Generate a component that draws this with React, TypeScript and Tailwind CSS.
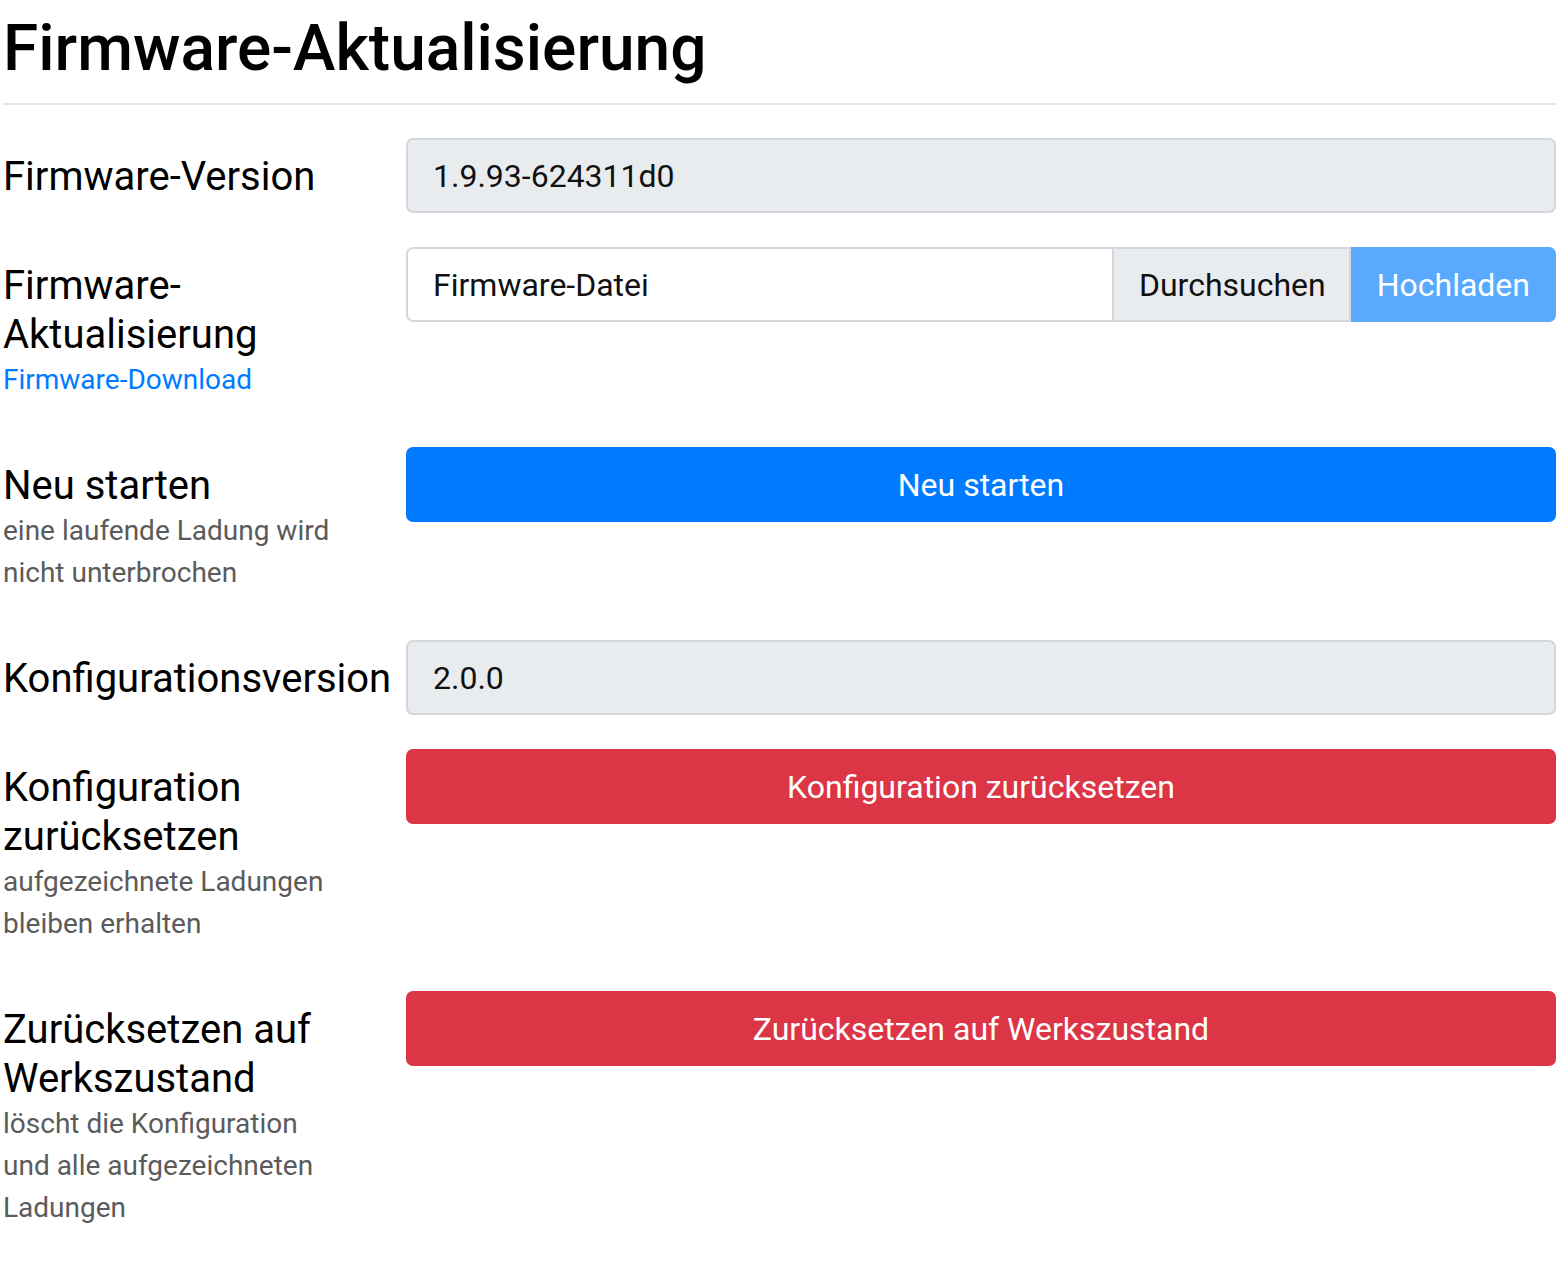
import React from 'react';

const font = { fontFamily: 'Roboto, "Liberation Sans", sans-serif' };

const Label = ({ title, children }: { title: React.ReactNode; children?: React.ReactNode }) => (
  <div className="py-[13.5px] pr-2">
    <div className="text-[40px] leading-[49px] text-black">{title}</div>
    {children}
  </div>
);

const Hint = ({ children }: { children: React.ReactNode }) => (
  <div className="text-[28px] leading-[42px] text-[#5b5b5b]">{children}</div>
);

const ReadOnly = ({ value }: { value: string }) => (
  <div className="h-[75px] flex items-center px-[25px] bg-[#e9ecef] border-2 border-[#d3d7dc] rounded-[7px] text-[32px] text-[#111]">
    {value}
  </div>
);

const ActionButton = ({ label, tone }: { label: string; tone: 'primary' | 'danger' }) => (
  <button
    type="button"
    className={
      'w-full h-[75px] rounded-[7px] text-white text-[32px] flex items-center justify-center ' +
      (tone === 'primary' ? 'bg-[#007bff]' : 'bg-[#dc3545]')
    }
  >
    {label}
  </button>
);

export default function App() {
  return (
    <div style={font} className="bg-white min-h-[1277px] pl-[3px] pr-[1px]">
      <h1 className="pt-[10px] text-[64px] leading-[77px] font-medium text-black">
        Firmware-Aktualisierung
      </h1>
      <div className="mt-[16px] h-[2px] bg-[#e3e5e8]" />

      <div className="mt-[33px] flex flex-col gap-[33px]">
        {/* Firmware version */}
        <div className="grid grid-cols-[403px_1fr] items-start">
          <Label title="Firmware-Version" />
          <ReadOnly value="1.9.93-624311d0" />
        </div>

        {/* Firmware upload */}
        <div className="grid grid-cols-[403px_1fr] items-start">
          <Label title={<>Firmware-<br />Aktualisierung</>}>
            <a href="#" className="block text-[28px] leading-[42px] text-[#007bff]">
              Firmware-Download
            </a>
          </Label>
          <div className="flex h-[75px] text-[32px]">
            <div className="flex-1 flex items-center px-[25px] border-2 border-r-0 border-[#d3d7dc] rounded-l-[7px] text-[#111]">
              Firmware-Datei
            </div>
            <div className="flex items-center pl-[25px] pr-[23px] bg-[#e9ecef] border-2 border-[#d3d7dc] text-[#111]">
              Durchsuchen
            </div>
            <button
              type="button"
              className="flex items-center px-[26px] bg-[#59a9ff] text-white rounded-r-[7px]"
            >
              Hochladen
            </button>
          </div>
        </div>

        {/* Restart */}
        <div className="grid grid-cols-[403px_1fr] items-start">
          <Label title="Neu starten">
            <Hint>
              eine laufende Ladung wird
              <br />
              nicht unterbrochen
            </Hint>
          </Label>
          <ActionButton label="Neu starten" tone="primary" />
        </div>

        {/* Config version */}
        <div className="grid grid-cols-[403px_1fr] items-start">
          <Label title="Konfigurationsversion" />
          <ReadOnly value="2.0.0" />
        </div>

        {/* Config reset */}
        <div className="grid grid-cols-[403px_1fr] items-start">
          <Label title={<>Konfiguration<br />zurücksetzen</>}>
            <Hint>
              aufgezeichnete Ladungen
              <br />
              bleiben erhalten
            </Hint>
          </Label>
          <ActionButton label="Konfiguration zurücksetzen" tone="danger" />
        </div>

        {/* Factory reset */}
        <div className="grid grid-cols-[403px_1fr] items-start">
          <Label title={<>Zurücksetzen auf<br />Werkszustand</>}>
            <Hint>
              löscht die Konfiguration
              <br />
              und alle aufgezeichneten
              <br />
              Ladungen
            </Hint>
          </Label>
          <ActionButton label="Zurücksetzen auf Werkszustand" tone="danger" />
        </div>
      </div>
    </div>
  );
}
